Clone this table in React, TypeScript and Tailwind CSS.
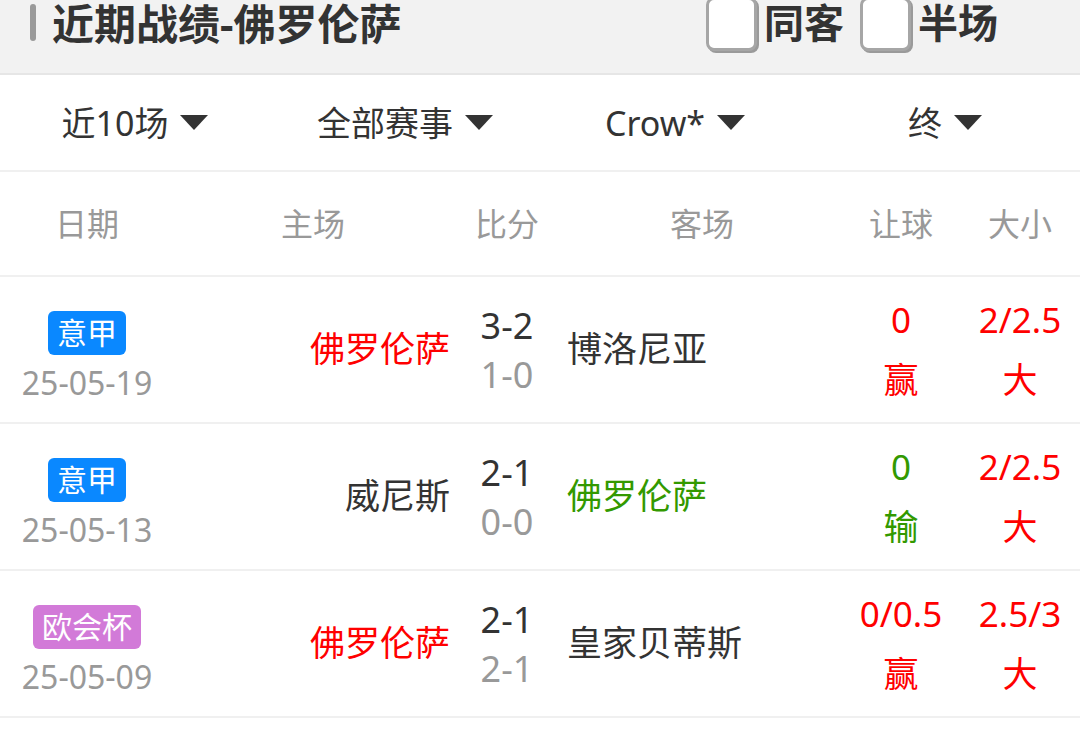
const FONT = "font-['Noto_Sans','Noto_Sans_CJK_SC',sans-serif]";

type Tone = "red" | "green" | "dark";

interface MatchRow {
  league: string;
  leagueColor: string;
  date: string;
  home: string;
  homeTone: Tone;
  score: string;
  half: string;
  away: string;
  awayTone: Tone;
  handicap: string;
  handicapResult: string;
  handicapTone: Tone;
  total: string;
  totalResult: string;
  totalTone: Tone;
}

const toneClass: Record<Tone, string> = {
  red: "text-[#ff0000]",
  green: "text-[#339900]",
  dark: "text-[#333333]",
};

const rows: MatchRow[] = [
  {
    league: "意甲",
    leagueColor: "bg-[#0a88ff]",
    date: "25-05-19",
    home: "佛罗伦萨",
    homeTone: "red",
    score: "3-2",
    half: "1-0",
    away: "博洛尼亚",
    awayTone: "dark",
    handicap: "0",
    handicapResult: "赢",
    handicapTone: "red",
    total: "2/2.5",
    totalResult: "大",
    totalTone: "red",
  },
  {
    league: "意甲",
    leagueColor: "bg-[#0a88ff]",
    date: "25-05-13",
    home: "威尼斯",
    homeTone: "dark",
    score: "2-1",
    half: "0-0",
    away: "佛罗伦萨",
    awayTone: "green",
    handicap: "0",
    handicapResult: "输",
    handicapTone: "green",
    total: "2/2.5",
    totalResult: "大",
    totalTone: "red",
  },
  {
    league: "欧会杯",
    leagueColor: "bg-[#d27ad8]",
    date: "25-05-09",
    home: "佛罗伦萨",
    homeTone: "red",
    score: "2-1",
    half: "2-1",
    away: "皇家贝蒂斯",
    awayTone: "dark",
    handicap: "0/0.5",
    handicapResult: "赢",
    handicapTone: "red",
    total: "2.5/3",
    totalResult: "大",
    totalTone: "red",
  },
];

const filters = ["近10场", "全部赛事", "Crow*", "终"];

const Caret = () => (
  <svg width="28" height="15" viewBox="0 0 28 15" className="shrink-0">
    <path d="M0 0H28L14 15Z" fill="#333333" />
  </svg>
);

const CheckBox = ({ label }: { label: string }) => (
  <div className="flex items-start gap-[7px]">
    <div className="-mt-[3px] h-[54px] w-[51px] rounded-[8px] border-[3px] border-[#a6a6a6] bg-white shadow-[2px_2px_0_#9a9a9a]" />
    <span className="text-[40px] font-bold leading-[46px] text-[#333333]">
      {label}
    </span>
  </div>
);

export default function App() {
  return (
    <div className={`${FONT} w-[1080px] h-[737px] overflow-hidden bg-white`}>
      {/* section header */}
      <div className="flex h-[75px] items-start justify-between border-b-2 border-[#e6e6e6] bg-[#f2f2f2] pr-[82px]">
        <div className="flex items-start">
          <div className="ml-[30px] mt-[4px] h-[37px] w-[6px] rounded-full bg-[#9a9a9a]" />
          <h1 className="ml-[16px] text-[42px] font-bold leading-[47px] text-[#333333]">
            近期战绩-佛罗伦萨
          </h1>
        </div>
        <div className="flex items-start gap-[16px]">
          <CheckBox label="同客" />
          <CheckBox label="半场" />
        </div>
      </div>

      {/* filters */}
      <div className="flex h-[97px] border-b-2 border-[#f0f0f0]">
        {filters.map((f) => (
          <div key={f} className="flex flex-1 items-center justify-center gap-[12px]">
            <span className="text-[34px] leading-none text-[#333333]">{f}</span>
            <Caret />
          </div>
        ))}
      </div>

      {/* column titles */}
      <div className="flex h-[105px] items-center border-b-2 border-[#f0f0f0] text-[32px] text-[#999999]">
        <div className="w-[174px] text-center">日期</div>
        <div className="w-[290px] pr-[12px] text-center">主场</div>
        <div className="w-[86px] text-center">比分</div>
        <div className="w-[292px] pl-[12px] text-center">客场</div>
        <div className="w-[118px] text-center">让球</div>
        <div className="w-[120px] text-center">大小</div>
      </div>

      {/* matches */}
      {rows.map((r, i) => (
        <div key={i} className="flex h-[147px] items-center border-b-2 border-[#f0f0f0]">
          <div className="flex h-full w-[174px] flex-col items-center justify-center gap-[12px] pt-[10px]">
            <span
              className={`${r.leagueColor} flex h-[44px] items-center rounded-[6px] px-[9px] text-[30px] leading-none text-white`}
            >
              {r.league}
            </span>
            <span className="text-[32px] leading-[32px] text-[#999999]">{r.date}</span>
          </div>
          <div className={`w-[290px] pr-[14px] text-right text-[35px] ${toneClass[r.homeTone]}`}>
            {r.home}
          </div>
          <div className="flex w-[86px] flex-col items-center text-[36px] leading-[49px]">
            <span className="text-[#333333]">{r.score}</span>
            <span className="text-[#999999]">{r.half}</span>
          </div>
          <div className={`w-[292px] pl-[17px] text-[35px] ${toneClass[r.awayTone]}`}>
            {r.away}
          </div>
          <div
            className={`flex w-[118px] flex-col items-center text-[35px] leading-[60px] ${toneClass[r.handicapTone]}`}
          >
            <span>{r.handicap}</span>
            <span>{r.handicapResult}</span>
          </div>
          <div
            className={`flex w-[120px] flex-col items-center text-[35px] leading-[60px] ${toneClass[r.totalTone]}`}
          >
            <span>{r.total}</span>
            <span>{r.totalResult}</span>
          </div>
        </div>
      ))}
    </div>
  );
}
